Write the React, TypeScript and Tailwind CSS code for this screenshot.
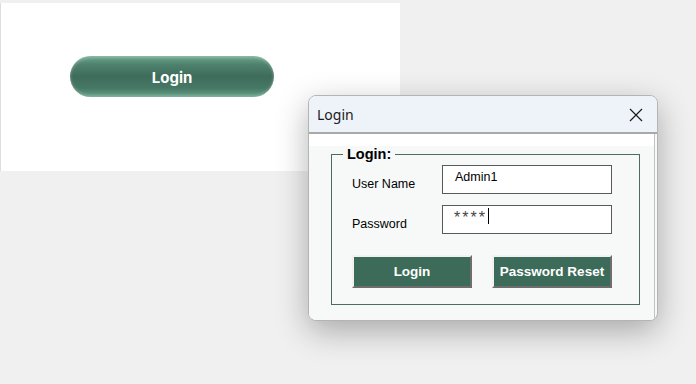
import React from 'react';

const App = () => {
    return (
        <div className="relative w-[696px] h-[384px] overflow-hidden bg-[#f0f0f0]">

            {/* page panel */}
            <div className="mt-[3px] w-[400px] h-[168px] bg-white border-l border-[#dedede] flex">
                <button
                    className="ml-[69px] mt-[53px] w-[204px] h-[41px] pt-[3px] rounded-full text-white text-[15px] font-bold shadow-[inset_0_2px_3px_rgba(255,255,255,0.25),inset_0_-2px_3px_rgba(255,255,255,0.2)] bg-[linear-gradient(180deg,#6aa68d_0%,#4d806c_22%,#3f6c5b_50%,#467765_78%,#64a087_100%)]"
                    style={{ fontFamily: 'Inter, "Noto Sans", sans-serif' }}
                >
                    Login
                </button>
            </div>

            {/* dialog window */}
            <div
                className="absolute left-[308px] top-[95px] w-[350px] h-[226px] flex flex-col rounded-lg overflow-hidden border border-[#b4b4b4] bg-[#f7f9f9] shadow-[0_10px_32px_rgba(0,0,0,0.3)]"
                style={{ fontFamily: '"Liberation Sans", Arial, sans-serif' }}
            >
                {/* title bar */}
                <div className="h-[38px] shrink-0 flex items-center justify-between pl-[8px] pr-[14px] bg-[#eef3fa] border-b-2 border-[#a9a9a9]">
                    <span className="text-[14px] text-[#1a1a1a] pt-[1px]" style={{ fontFamily: '"Noto Sans", sans-serif' }}>Login</span>
                    <svg width="14" height="14" viewBox="0 0 14 14" className="mt-[1px]">
                        <path d="M1 1 L13 13 M13 1 L1 13" stroke="#1a1a1a" strokeWidth="1.2" fill="none" />
                    </svg>
                </div>

                {/* body */}
                <div className="flex-1 mr-[2px] mb-[1px] border-r border-b border-[#c2c2c2] bg-white">
                    <div className="h-full mb-[1px] bg-[#f7f9f9]">
                        <fieldset className="ml-[22px] mt-[12px] w-[309px] h-[159px] border border-[#4d6b60]">
                            <legend className="ml-[11px] px-[4px] text-[14.5px] font-bold leading-[16px] text-black">Login:</legend>

                            <div className="pl-[20px]">
                                <div className="mt-[3px] flex">
                                    <div className="w-[90px] pt-[12px] text-[12.5px] leading-[15px] text-black">User Name</div>
                                    <div className="w-[170px] h-[29px] bg-white border border-[#5a5a5a] pl-[12px] pt-[4px] text-[12.5px] leading-[15px] text-black">
                                        Admin1
                                    </div>
                                </div>

                                <div className="mt-[11px] flex">
                                    <div className="w-[90px] pt-[12px] text-[12.5px] leading-[15px] text-black">Password</div>
                                    <div className="w-[170px] h-[29px] bg-white border border-[#5a5a5a] pl-[11px] pt-[2px] flex items-start">
                                        <span className="text-[16px] leading-[16px] tracking-[2px] pt-[2px] text-[#444]">****</span>
                                        <span className="ml-[1px] w-[1px] h-[16px] bg-black"></span>
                                    </div>
                                </div>

                                <div className="mt-[21px] flex gap-[20px]">
                                    <button className="w-[120px] h-[33px] pt-[1px] bg-[#3d6b59] border-2 border-t-[#f2f2f2] border-l-[#f2f2f2] border-r-[#6e6e6e] border-b-[#6e6e6e] text-white text-[13.5px] font-bold">
                                        Login
                                    </button>
                                    <button className="w-[120px] h-[33px] pt-[1px] bg-[#3d6b59] border-2 border-t-[#f2f2f2] border-l-[#f2f2f2] border-r-[#6e6e6e] border-b-[#6e6e6e] text-white text-[13.5px] font-bold">
                                        Password Reset
                                    </button>
                                </div>
                            </div>
                        </fieldset>
                    </div>
                </div>
            </div>
        </div>
    )
}

export default App;
